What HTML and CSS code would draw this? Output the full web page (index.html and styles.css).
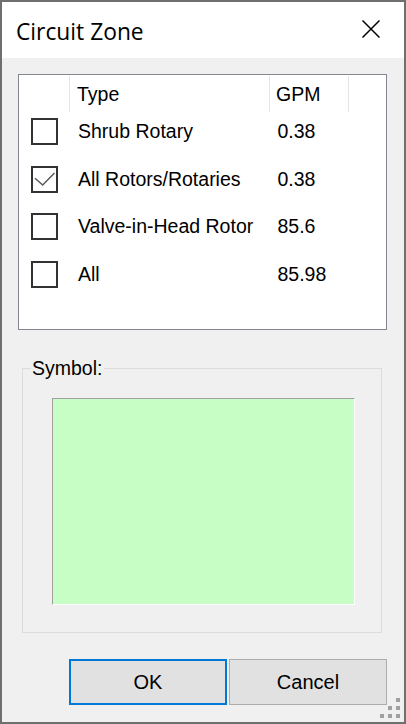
FILE: index.html
```html
<!DOCTYPE html>
<html>
<head>
<meta charset="utf-8">
<link rel="stylesheet" href="styles.css">
</head>
<body>
<div class="window">
  <div class="titlebar">
    <span class="title">Circuit Zone</span>
    <svg class="close" width="18" height="18" viewBox="0 0 18 18"><path d="M0.5 0.5 L17.5 17.5 M17.5 0.5 L0.5 17.5" stroke="#000" stroke-width="1.5" fill="none"/></svg>
  </div>
  <div class="content">
    <div class="listbox">
      <div class="row header">
        <div class="c0"></div>
        <div class="c1 hd">Type</div>
        <div class="c2 hd">GPM</div>
      </div>
      <div class="row item">
        <div class="c0"><span class="check"></span></div>
        <div class="c1">Shrub Rotary</div>
        <div class="c2">0.38</div>
      </div>
      <div class="row item">
        <div class="c0"><span class="check"><svg width="23" height="23" viewBox="0 0 23 23"><polyline points="2,10.3 9.7,17 21.5,5" fill="none" stroke="#5a5a5a" stroke-width="1.5"/></svg></span></div>
        <div class="c1">All Rotors/Rotaries</div>
        <div class="c2">0.38</div>
      </div>
      <div class="row item">
        <div class="c0"><span class="check"></span></div>
        <div class="c1">Valve-in-Head Rotor</div>
        <div class="c2">85.6</div>
      </div>
      <div class="row item">
        <div class="c0"><span class="check"></span></div>
        <div class="c1">All</div>
        <div class="c2">85.98</div>
      </div>
    </div>
    <div class="group">
      <span class="group-label">Symbol:</span>
      <div class="swatch"></div>
    </div>
    <div class="buttons">
      <button class="btn default">OK</button>
      <button class="btn">Cancel</button>
    </div>
  </div>
  <svg class="grip" width="20" height="20" viewBox="0 0 20 20">
    <rect x="16" y="0" width="4" height="4" fill="#a0a0a0"/>
    <rect x="8" y="8" width="4" height="4" fill="#a0a0a0"/>
    <rect x="16" y="8" width="4" height="4" fill="#a0a0a0"/>
    <rect x="0" y="16" width="4" height="4" fill="#a0a0a0"/>
    <rect x="8" y="16" width="4" height="4" fill="#a0a0a0"/>
    <rect x="16" y="16" width="4" height="4" fill="#a0a0a0"/>
  </svg>
</div>
</body>
</html>
```

FILE: styles.css
```css
* { box-sizing: border-box; }

html, body {
  margin: 0;
  padding: 0;
  width: 406px;
  height: 724px;
  overflow: hidden;
  background: #f0f0f0;
}

body {
  font-family: "Liberation Sans", Arial, sans-serif;
  font-size: 19.5px;
  color: #000;
}

.window {
  position: relative;
  width: 406px;
  height: 724px;
  border: 2px solid #6f6f6f;
  background: #f0f0f0;
  display: flex;
  flex-direction: column;
}

.titlebar {
  height: 56px;
  flex: none;
  background: #fff;
  display: flex;
  align-items: center;
  justify-content: space-between;
  padding: 0 24px 0 14px;
}

.title {
  font-family: "Open Sans", "Noto Sans", sans-serif;
  font-size: 22.8px;
  padding-top: 2px;
}

.close {
  display: block;
  margin-bottom: 2px;
}

.content {
  flex: 1;
  display: flex;
  flex-direction: column;
}

.listbox {
  margin: 16px 17px 0 16px;
  height: 256px;
  border: 1px solid #828790;
  background: #fff;
}

.row {
  display: grid;
  grid-template-columns: 50px 200px 80px;
}

.header {
  margin-top: 1px;
  height: 32px;
  line-height: 36px;
}

.header .c1 {
  border-left: 1px solid #e5e5e5;
  padding-left: 7px;
}

.header .c2 {
  border-left: 1px solid #e5e5e5;
  border-right: 1px solid #e5e5e5;
  padding-left: 6px;
}

.item {
  height: 47.67px;
  line-height: 46px;
}

.item .c1 {
  padding-left: 9px;
  white-space: nowrap;
}

.item .c2 {
  padding-left: 8.5px;
}

.check {
  display: block;
  width: 27px;
  height: 27px;
  margin: 10px 0 0 12px;
  border: 2px solid #333;
  background: #fff;
}

.check svg {
  display: block;
}

.group {
  position: relative;
  margin: 38px 22px 0 20px;
  height: 265px;
  border: 1px solid #dcdcdc;
  padding: 29px 0 0 29px;
}

.group-label {
  position: absolute;
  top: -12px;
  left: 8px;
  line-height: 22px;
  padding: 0 2px 0 1px;
  background: #f0f0f0;
}

.swatch {
  width: 303px;
  height: 207px;
  background: #c6fec6;
  border-top: 1px solid #a0a0a0;
  border-left: 1px solid #a0a0a0;
  border-right: 1px solid #fff;
  border-bottom: 1px solid #fff;
}

.buttons {
  display: flex;
  justify-content: flex-end;
  gap: 2px;
  margin: 26px 17px 0 0;
}

.btn {
  width: 158px;
  height: 46px;
  margin: 0;
  padding: 0;
  font-family: "Liberation Sans", Arial, sans-serif;
  font-size: 20px;
  color: #000;
  background: #e1e1e1;
  border: 1px solid #adadad;
  border-radius: 0;
}

.btn.default {
  border: 2px solid #0078d7;
}

.grip {
  position: absolute;
  right: 4px;
  bottom: 4px;
}
```
